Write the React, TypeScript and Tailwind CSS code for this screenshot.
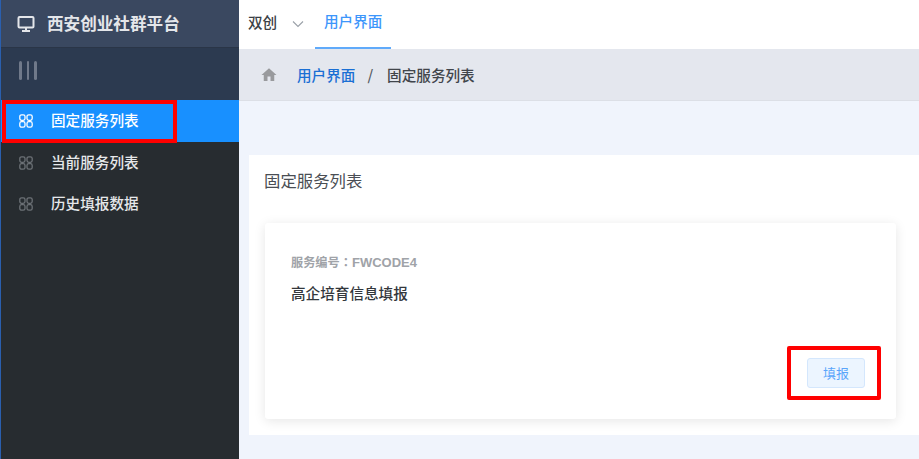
import React from "react";

const font = { fontFamily: '"Noto Sans CJK SC", "Noto Sans", sans-serif' };

function Grid({ className }: { className: string }) {
  return (
    <svg width="14" height="14" viewBox="0 0 14 14" fill="none" stroke="currentColor" strokeWidth="1.3" className={className}>
      <rect x="0.8" y="0.8" width="5.2" height="5.6" rx="1.8" />
      <rect x="8" y="0.8" width="5.2" height="5.6" rx="1.8" />
      <rect x="0.8" y="7.6" width="5.2" height="5.6" rx="1.8" />
      <rect x="8" y="7.6" width="5.2" height="5.6" rx="1.8" />
    </svg>
  );
}

function MenuItem({ label, active }: { label: string; active?: boolean }) {
  return (
    <div className={`relative flex items-center pl-[18px] gap-[18px] text-[14.6px] ${active ? "h-[42px] bg-[#1890ff] text-white" : "h-[41px] text-[#e6e8ea]"}`}>
      <Grid className={active ? "text-white" : "text-[#6c7176]"} />
      <span className={`font-medium ${active ? "mb-[2px]" : "mb-[1px]"}`}>{label}</span>
      {active && <div className="absolute left-[1px] top-0 w-[175px] h-[43px] border-[4px] border-[#ff0000]" />}
    </div>
  );
}

export default function App() {
  return (
    <div className="relative flex w-[919px] h-[459px] overflow-hidden bg-[#f0f4fc]" style={font}>
      <aside className="w-[239px] shrink-0 flex flex-col bg-[#272c30] border-l border-[#2a5fae]">
        <div className="h-[47px] bg-[#3a4860] flex items-center pl-[16px] gap-[12px] text-[#e4e6ea]">
          <svg width="18" height="18" viewBox="0 0 18 18" fill="none" stroke="currentColor" strokeWidth="2">
            <rect x="1.5" y="2" width="15" height="10.5" rx="1" />
            <path d="M9 12.5v3M5 16h8" />
          </svg>
          <span className="text-[16.6px] leading-[20px] font-bold mb-[1px]">西安创业社群平台</span>
        </div>
        <div className="h-[53px] bg-[#2c3a50] flex items-start pt-[13px] pl-[18px] gap-[5px] border-t border-[#2a3547]">
          <div className="w-[2.5px] h-[19px] bg-[#70798a] rounded-sm" />
          <div className="w-[2.5px] h-[19px] bg-[#70798a] rounded-sm" />
          <div className="w-[2.5px] h-[19px] bg-[#70798a] rounded-sm" />
        </div>
        <MenuItem label="固定服务列表" active />
        <MenuItem label="当前服务列表" />
        <MenuItem label="历史填报数据" />
      </aside>
      <main className="flex-1 min-w-0 flex flex-col">
        <header className="h-[49px] bg-white flex items-stretch pl-[9px] shrink-0">
          <div className="flex items-center text-[14.6px] font-medium text-[#3b3f45] mb-[5px]">双创</div>
          <div className="flex items-center ml-[15px] mb-[1px]">
            <svg width="12" height="8" viewBox="0 0 12 8" fill="none" stroke="#9aa0a8" strokeWidth="1.1">
              <path d="M1 1.5l5 5 5-5" />
            </svg>
          </div>
          <div className="ml-[11px] w-[76px] flex items-center justify-center text-[14.6px] font-medium text-[#3d96fb] border-b-[2px] border-[#60aafa] pb-[5px]">用户界面</div>
        </header>
        <div className="h-[52px] bg-[#e4e7ee] border-b border-[#dcdfe6] flex items-center pl-[21px] text-[14.6px] font-medium shrink-0">
          <svg width="18" height="18" viewBox="0 0 24 24" fill="#999a9d">
            <path d="M10 20v-6h4v6h5v-8h3L12 3 2 12h3v8z" />
          </svg>
          <span className="ml-[19px] text-[#1a6fd4]">用户界面</span>
          <span className="ml-[12px] text-[#555a60]">/</span>
          <span className="ml-[14px] text-[#41454b]">固定服务列表</span>
        </div>
        <div className="flex-1 pl-[10px] pt-[54px]">
          <section className="h-[280px] bg-white pl-[15px] pr-[23px] pt-[14px]">
            <h2 className="text-[16.4px] leading-[22px] font-normal text-[#4a4e54]">固定服务列表</h2>
            <div className="relative ml-[1px] mt-[32px] h-[196px] rounded-[3px] bg-white shadow-[0_2px_12px_rgba(0,0,0,0.1)] pl-[26px] pt-[31px]">
              <div className="text-[12.2px] leading-[16px] font-bold text-[#a0a3a8]">
                服务编号<span style={{ fontFamily: '"Noto Sans CJK TC", sans-serif' }}>：</span>
                <span className="text-[13px]" style={{ fontFamily: '"Liberation Sans", sans-serif' }}>FWCODE4</span>
              </div>
              <div className="mt-[12px] text-[14.6px] leading-[20px] font-medium text-[#33373c]">高企培育信息填报</div>
              <div className="absolute left-[522px] top-[123px] w-[94px] h-[54px] border-[4px] border-[#ff0000] rounded-[2px] flex items-center justify-center">
                <button className="ml-[4px] w-[58px] h-[30px] rounded-[3px] bg-[#ecf5ff] border border-[#d4e7fd] text-[13px] text-[#5aa5fb]">填报</button>
              </div>
            </div>
          </section>
        </div>
      </main>
    </div>
  );
}
